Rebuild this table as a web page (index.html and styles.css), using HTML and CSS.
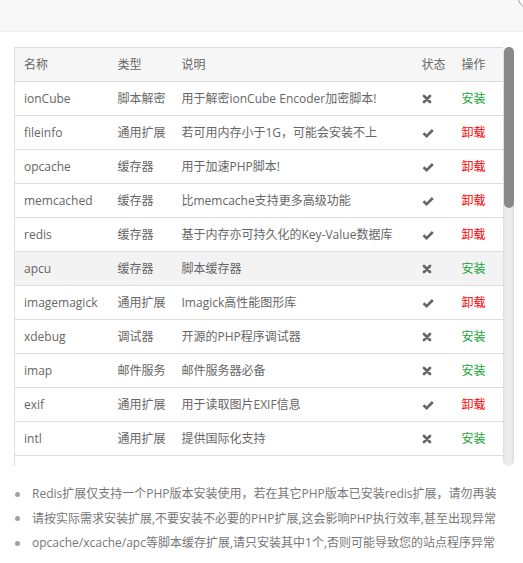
FILE: index.html
```html
<!DOCTYPE html>
<html lang="zh-CN">
<head>
<meta charset="utf-8">
<title>PHP扩展</title>
<link rel="stylesheet" href="styles.css">
</head>
<body>
<div class="layer">
  <div class="layer-title"><span class="layer-close"></span></div>
  <div class="layer-content">
    <div class="table-wrap">
      <div class="table-viewport">
        <table class="ext-table">
          <colgroup>
            <col class="c-name"><col class="c-type"><col class="c-desc"><col class="c-status"><col class="c-op">
          </colgroup>
          <thead>
            <tr><th>名称</th><th>类型</th><th>说明</th><th>状态</th><th>操作</th></tr>
          </thead>
          <tbody>
            <tr><td>ionCube</td><td>脚本解密</td><td>用于解密ionCube Encoder加密脚本!</td><td><svg class="ico" width="12" height="10" viewBox="0 0 12 10"><path d="M2 2L8 8M8 2L2 8"/></svg></td><td><a class="op install">安装</a></td></tr>
            <tr><td>fileinfo</td><td>通用扩展</td><td>若可用内存小于1G，可能会安装不上</td><td><svg class="ico" width="12" height="10" viewBox="0 0 12 10"><path class="ok" d="M1.5 5.3L4.6 8.2L10.8 2"/></svg></td><td><a class="op uninstall">卸载</a></td></tr>
            <tr><td>opcache</td><td>缓存器</td><td>用于加速PHP脚本!</td><td><svg class="ico" width="12" height="10" viewBox="0 0 12 10"><path class="ok" d="M1.5 5.3L4.6 8.2L10.8 2"/></svg></td><td><a class="op uninstall">卸载</a></td></tr>
            <tr><td>memcached</td><td>缓存器</td><td>比memcache支持更多高级功能</td><td><svg class="ico" width="12" height="10" viewBox="0 0 12 10"><path class="ok" d="M1.5 5.3L4.6 8.2L10.8 2"/></svg></td><td><a class="op uninstall">卸载</a></td></tr>
            <tr><td>redis</td><td>缓存器</td><td>基于内存亦可持久化的Key-Value数据库</td><td><svg class="ico" width="12" height="10" viewBox="0 0 12 10"><path class="ok" d="M1.5 5.3L4.6 8.2L10.8 2"/></svg></td><td><a class="op uninstall">卸载</a></td></tr>
            <tr class="hover"><td>apcu</td><td>缓存器</td><td>脚本缓存器</td><td><svg class="ico" width="12" height="10" viewBox="0 0 12 10"><path d="M2 2L8 8M8 2L2 8"/></svg></td><td><a class="op install">安装</a></td></tr>
            <tr><td>imagemagick</td><td>通用扩展</td><td>Imagick高性能图形库</td><td><svg class="ico" width="12" height="10" viewBox="0 0 12 10"><path class="ok" d="M1.5 5.3L4.6 8.2L10.8 2"/></svg></td><td><a class="op uninstall">卸载</a></td></tr>
            <tr><td>xdebug</td><td>调试器</td><td>开源的PHP程序调试器</td><td><svg class="ico" width="12" height="10" viewBox="0 0 12 10"><path d="M2 2L8 8M8 2L2 8"/></svg></td><td><a class="op install">安装</a></td></tr>
            <tr><td>imap</td><td>邮件服务</td><td>邮件服务器必备</td><td><svg class="ico" width="12" height="10" viewBox="0 0 12 10"><path d="M2 2L8 8M8 2L2 8"/></svg></td><td><a class="op install">安装</a></td></tr>
            <tr><td>exif</td><td>通用扩展</td><td>用于读取图片EXIF信息</td><td><svg class="ico" width="12" height="10" viewBox="0 0 12 10"><path class="ok" d="M1.5 5.3L4.6 8.2L10.8 2"/></svg></td><td><a class="op uninstall">卸载</a></td></tr>
            <tr><td>intl</td><td>通用扩展</td><td>提供国际化支持</td><td><svg class="ico" width="12" height="10" viewBox="0 0 12 10"><path d="M2 2L8 8M8 2L2 8"/></svg></td><td><a class="op install">安装</a></td></tr>
            <tr class="peek"><td></td><td></td><td></td><td></td><td></td></tr>
          </tbody>
        </table>
      </div>
      <div class="scrollbar"><div class="scroll-thumb"></div></div>
    </div>
    <ul class="tips">
      <li>Redis扩展仅支持一个PHP版本安装使用，若在其它PHP版本已安装redis扩展，请勿再装</li>
      <li>请按实际需求安装扩展,不要安装不必要的PHP扩展,这会影响PHP执行效率,甚至出现异常</li>
      <li>opcache/xcache/apc等脚本缓存扩展,请只安装其中1个,否则可能导致您的站点程序异常</li>
    </ul>
  </div>
</div>
</body>
</html>
```

FILE: styles.css
```css
* { box-sizing: border-box; }
html, body { margin: 0; padding: 0; background: #fff; }
body {
  font-family: "Open Sans", "Noto Sans CJK SC", sans-serif;
  font-size: 12px;
  color: #666;
  overflow: hidden;
}
.layer { width: 523px; height: 563px; overflow: hidden; }
.layer-title {
  position: relative;
  height: 32px;
  background: #f8f8f8;
  border-bottom: 1px solid #eee;
}
.layer-close {
  position: absolute;
  left: 517px;
  top: -24px;
  width: 36px;
  height: 36px;
  border-radius: 50%;
  border: 1.5px solid #999;
  background: #fff;
}
.layer-content { padding: 15px 9px 0 14px; }
.table-wrap {
  display: flex;
  height: 419px;
}
.table-viewport {
  width: 489px;
  height: 419px;
  overflow: hidden;
}
.scrollbar {
  width: 11px;
  height: 419px;
  border-radius: 6px;
  background: linear-gradient(to right, #dcdcdc 0, #ededed 25%, #ececec 75%, #dcdcdc 100%);
}
.scroll-thumb {
  height: 161px;
  margin: 0 0.5px;
  border-radius: 5px;
  background: #898989;
}
.ext-table {
  width: 489px;
  table-layout: fixed;
  border-collapse: collapse;
  border: 1px solid #ddd;
}
.c-name { width: 94px; }
.c-type { width: 64px; }
.c-desc { width: 240px; }
.c-status { width: 40px; }
.c-op { width: 51px; }
.ext-table th,
.ext-table td {
  padding: 8px 9px;
  line-height: 17px;
  height: 34px;
  text-align: left;
  font-weight: normal;
  border-bottom: 1px solid #ddd;
  white-space: nowrap;
  overflow: hidden;
  vertical-align: middle;
}
.ext-table thead tr { background: #f6f6f6; }
.ext-table tr.hover { background: #f3f3f3; }
.ico { display: block; }
.ico path {
  fill: none;
  stroke: #666;
  stroke-width: 2.8;
  stroke-linecap: round;
}
.ico path.ok { stroke-width: 2.6; stroke-linecap: butt; stroke-linejoin: miter; }
.op { text-decoration: none; cursor: pointer; }
.install { color: #20a53a; }
.uninstall { color: #ff0000; }
.tips {
  list-style: none;
  margin: 16px 0 0;
  padding: 0;
  color: #777;
}
.tips li {
  display: flex;
  align-items: center;
  line-height: 24.5px;
  white-space: nowrap;
}
.tips li::before {
  content: "";
  width: 5px;
  height: 5px;
  border-radius: 50%;
  background: #a0a0a0;
  margin: 0 12px 0 1px;
  flex: none;
}
```
